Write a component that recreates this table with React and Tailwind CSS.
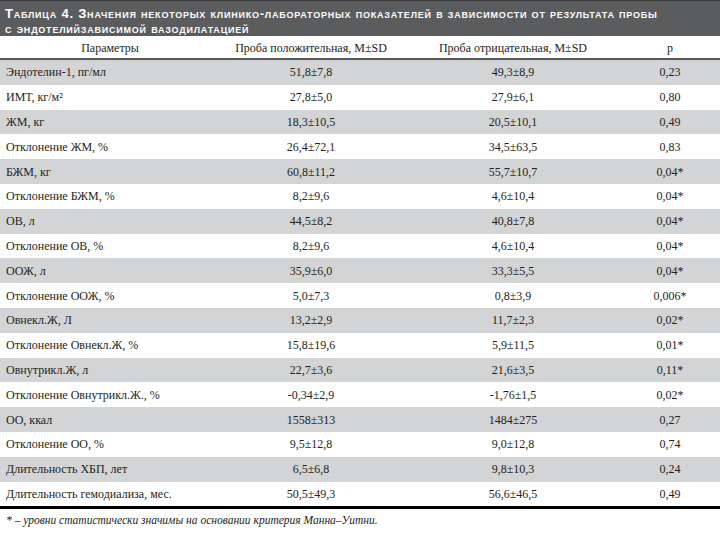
const rows = [
  ['Эндотелин-1, пг/мл', '51,8±7,8', '49,3±8,9', '0,23'],
  ['ИМТ, кг/м²', '27,8±5,0', '27,9±6,1', '0,80'],
  ['ЖМ, кг', '18,3±10,5', '20,5±10,1', '0,49'],
  ['Отклонение ЖМ, %', '26,4±72,1', '34,5±63,5', '0,83'],
  ['БЖМ, кг', '60,8±11,2', '55,7±10,7', '0,04*'],
  ['Отклонение БЖМ, %', '8,2±9,6', '4,6±10,4', '0,04*'],
  ['ОВ, л', '44,5±8,2', '40,8±7,8', '0,04*'],
  ['Отклонение ОВ, %', '8,2±9,6', '4,6±10,4', '0,04*'],
  ['ООЖ, л', '35,9±6,0', '33,3±5,5', '0,04*'],
  ['Отклонение ООЖ, %', '5,0±7,3', '0,8±3,9', '0,006*'],
  ['Овнекл.Ж, Л', '13,2±2,9', '11,7±2,3', '0,02*'],
  ['Отклонение Овнекл.Ж, %', '15,8±19,6', '5,9±11,5', '0,01*'],
  ['Овнутрикл.Ж, л', '22,7±3,6', '21,6±3,5', '0,11*'],
  ['Отклонение Овнутрикл.Ж., %', '-0,34±2,9', '-1,76±1,5', '0,02*'],
  ['ОО, ккал', '1558±313', '1484±275', '0,27'],
  ['Отклонение ОО, %', '9,5±12,8', '9,0±12,8', '0,74'],
  ['Длительность ХБП, лет', '6,5±6,8', '9,8±10,3', '0,24'],
  ['Длительность гемодиализа, мес.', '50,5±49,3', '56,6±46,5', '0,49'],
];

// one table row; every second row is shaded
const Row = ({ cells, shaded }) => (
  <div className={`flex h-[24.8px] items-center ${shaded ? 'bg-[#d3d4d5]' : 'bg-white'}`}>
    <div className="w-[220px] pl-[6px]">{cells[0]}</div>
    <div className="w-[182px] text-center">{cells[1]}</div>
    <div className="w-[222px] text-center">{cells[2]}</div>
    <div className="w-[92px] text-center">{cells[3]}</div>
  </div>
);

export default function App() {
  return (
    <div className="w-[720px] h-[533px] bg-white text-[#231f20] font-['Liberation_Serif',serif] text-[12px] overflow-hidden">
      {/* Title band */}
      <div className="h-[36px] bg-[#5b5c5e] border-t border-[#3a3a3c] px-[5px] pt-[5px] text-white font-['Liberation_Sans',sans-serif] font-bold text-[13px] leading-[15px] tracking-[0.06em] [font-variant:small-caps] whitespace-nowrap">
        <div>Таблица 4. Значения некоторых клинико-лабораторных показателей в зависимости от результата пробы</div>
        <div>с эндотелийзависимой вазодилатацией</div>
      </div>

      {/* Column headings */}
      <div className="flex h-[24px] items-center pt-[1px] border-b-2 border-[#58595b]">
        <div className="w-[220px] text-center">Параметры</div>
        <div className="w-[182px] text-center">Проба положительная, M±SD</div>
        <div className="w-[222px] text-center">Проба отрицательная, M±SD</div>
        <div className="w-[92px] text-center">p</div>
      </div>

      {rows.map((r, i) => (
        <Row key={i} cells={r} shaded={i % 2 === 0} />
      ))}

      <div className="border-t-[3px] border-black" />
      <div className="pl-[6px] pt-[4px] italic text-[11.5px] leading-[15px]">
        * – уровни статистически значимы на основании критерия Манна–Уитни.
      </div>
    </div>
  );
}
